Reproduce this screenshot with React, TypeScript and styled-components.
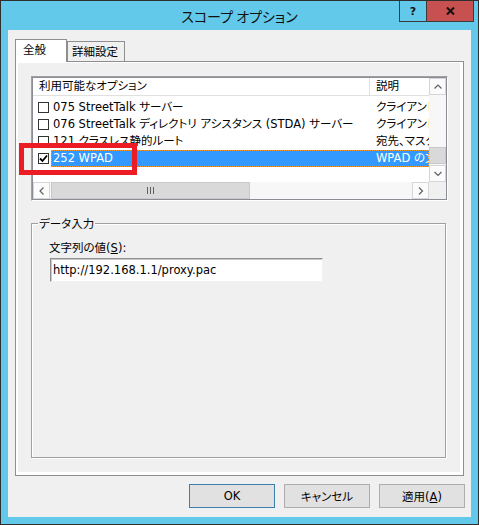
import React from 'react';
import styled, { createGlobalStyle } from 'styled-components';

const UI_FONT = `"DejaVu Sans", "Noto Sans CJK JP", sans-serif`;

const GlobalStyle = createGlobalStyle`
  html, body {
    margin: 0;
    padding: 0;
    background: #ffffff;
  }
  body {
    font-family: ${UI_FONT};
    font-size: 11.5px;
    font-feature-settings: "palt";
    color: #000;
  }
  * {
    box-sizing: border-box;
  }
`;

const Window = styled.div`
  width: 479px;
  height: 525px;
  border: 1px solid #2f2f2f;
  background: #63c9ea;
  display: flex;
  flex-direction: column;
`;

const TitleBar = styled.div`
  height: 29px;
  display: grid;
  grid-template-columns: 1fr auto 1fr;
  align-items: start;
`;

const Title = styled.div`
  grid-column: 2;
  align-self: center;
  font-family: "Noto Sans CJK JP", sans-serif;
  font-size: 14px;
  line-height: 18px;
  color: #111;
`;

const CaptionButtons = styled.div`
  grid-column: 3;
  justify-self: end;
  margin-right: 4px;
  display: flex;
`;

const CaptionButton = styled.div<{ $close?: boolean }>`
  width: ${(p) => (p.$close ? 48 : 27)}px;
  height: 21px;
  display: flex;
  align-items: center;
  justify-content: center;
  background: ${(p) => (p.$close ? '#c75050' : 'transparent')};
  border: 1px solid #3a3a3a;
  border-top: none;
  border-right: ${(p) => (p.$close ? '1px solid #3a3a3a' : 'none')};
  font-family: "DejaVu Sans", sans-serif;
  font-weight: bold;
  font-size: 11px;
  color: #111;
`;

const Frame = styled.div`
  flex: 1;
  padding: 0 7px 7px;
  display: flex;
`;

const Client = styled.div`
  flex: 1;
  background: #f0f0f0;
  padding: 9px 7px 9px;
  display: flex;
  flex-direction: column;
`;

const TabStrip = styled.div`
  height: 22px;
  display: flex;
  align-items: flex-end;
  position: relative;
  z-index: 1;
`;

const Tab = styled.div<{ $active?: boolean; $w: number }>`
  width: ${(p) => p.$w}px;
  height: ${(p) => (p.$active ? 23 : 20)}px;
  margin-bottom: ${(p) => (p.$active ? -1 : 0)}px;
  background: ${(p) => (p.$active ? '#ffffff' : '#f0f0f0')};
  border: 1px solid #8e8e8e;
  border-bottom: none;
  padding: 3px 0 0 ${(p) => (p.$active ? 7 : 4)}px;
  line-height: 14px;
  white-space: nowrap;
`;

const TabPanel = styled.div`
  height: 415px;
  border: 1px solid #8e8e8e;
  background: #ffffff;
  padding: 1px 3px 3px 2px;
  display: flex;
`;

const Page = styled.div`
  flex: 1;
  position: relative;
  background: #f0f0f0;
  padding: 13px 0 0 13px;
`;

const ListFrame = styled.div`
  width: 417px;
  height: 125px;
  border: 1px solid;
  border-color: #a0a0a0 #ffffff #ffffff #a0a0a0;
`;

const ListInner = styled.div`
  height: 100%;
  border: 1px solid #8a8d94;
  background: #ffffff;
  display: grid;
  grid-template-columns: 396px 17px;
  grid-template-rows: 104px 17px;
`;

const ListArea = styled.div`
  overflow: hidden;
`;

const Header = styled.div`
  height: 18px;
  display: grid;
  grid-template-columns: 337px 1fr;
  border-bottom: 1px solid #e0e0e0;
`;

const HeaderCell = styled.div<{ $divider?: boolean }>`
  line-height: 17px;
  padding-left: 6px;
  border-right: ${(p) => (p.$divider ? '1px solid #e0e0e0' : 'none')};
  white-space: nowrap;
  overflow: hidden;
`;

const Rows = styled.div`
  padding-top: 3px;
`;

const Row = styled.div`
  height: 17px;
  display: flex;
  align-items: center;
  padding-left: 5px;
`;

const CheckBox = styled.div`
  flex: none;
  width: 11px;
  height: 11px;
  margin-right: 2px;
  border: 1px solid #333333;
  background: #ffffff;
  display: flex;
  align-items: center;
  justify-content: center;
`;

const Cells = styled.div<{ $selected?: boolean }>`
  flex: 1;
  min-width: 0;
  height: 17px;
  display: grid;
  grid-template-columns: 319px 59px;
  background: ${(p) => (p.$selected ? '#3399ff' : 'transparent')};
  color: ${(p) => (p.$selected ? '#ffffff' : '#000000')};
  outline: ${(p) => (p.$selected ? '1px dotted #f29a2e' : 'none')};
  outline-offset: -1px;
`;

const Cell = styled.div<{ $pad: number }>`
  line-height: 17px;
  padding-left: ${(p) => p.$pad}px;
  white-space: nowrap;
  overflow: hidden;
`;

const VScroll = styled.div`
  display: flex;
  flex-direction: column;
  background: #f7f7f7;
`;

const HScroll = styled.div`
  display: flex;
  background: #f7f7f7;
`;

const Track = styled.div<{ $vertical?: boolean }>`
  flex: 1;
  display: flex;
  flex-direction: ${(p) => (p.$vertical ? 'column' : 'row')};
  justify-content: ${(p) => (p.$vertical ? 'flex-end' : 'flex-start')};
  padding: ${(p) => (p.$vertical ? '0 0 1px' : '0 0 0 1px')};
`;

const Thumb = styled.div<{ $vertical?: boolean }>`
  width: ${(p) => (p.$vertical ? '17px' : '199px')};
  height: 17px;
  background: #d9d9d9;
  border: 1px solid #c9c9c9;
  display: flex;
  align-items: center;
  justify-content: center;
`;

const Grip = styled.div`
  width: 7px;
  height: 7px;
  background: repeating-linear-gradient(to right, #606060 0 1px, transparent 1px 3px);
`;

const ArrowButton = styled.div`
  flex: none;
  width: 17px;
  height: 17px;
  border: 1px solid #d6d6d6;
  background: #fbfbfb;
  display: flex;
  align-items: center;
  justify-content: center;
`;

const Corner = styled.div`
  background: #f0f0f0;
`;

const GroupBox = styled.div`
  margin-top: 22px;
  width: 415px;
  height: 235px;
  border: 1px solid #a0a0a0;
  box-shadow: inset 1px 1px 0 #ffffff, 1px 1px 0 #ffffff;
  padding-left: 17px;
`;

const Legend = styled.div`
  width: max-content;
  margin: -7px 0 0 -11px;
  padding: 0 1px;
  line-height: 14px;
  background: #f0f0f0;
`;

const FieldLabel = styled.div`
  margin-top: 10px;
  line-height: 14px;
`;

const TextField = styled.input`
  display: block;
  margin: 3px 0 0 1px;
  width: 273px;
  height: 24px;
  padding: 0 2px;
  font: inherit;
  color: #000;
  background: #ffffff;
  border: 1px solid;
  border-color: #8f8f8f #f2f2f2 #f2f2f2 #8f8f8f;
  box-shadow: inset 1px 1px 0 #c8c8c8;
  outline: none;
`;

const ButtonRow = styled.div`
  margin: 8px -1px 0 0;
  display: flex;
  justify-content: flex-end;
  gap: 9px;
`;

const Button = styled.button<{ $default?: boolean }>`
  width: 86px;
  height: 24px;
  padding: 0;
  background: #e1e1e1;
  border: 1px solid ${(p) => (p.$default ? '#3c7fb1' : '#adadad')};
  font: inherit;
  color: #000;
`;

const Highlight = styled.div`
  position: absolute;
  left: 1px;
  top: 80px;
  width: 118px;
  height: 32px;
  border: 5px solid #ec1c24;
  pointer-events: none;
`;

const Chevron = ({ dir }: { dir: 'up' | 'down' | 'left' | 'right' }) => {
  const pts: Record<string, string> = {
    up: '0.5,4.5 4,1 7.5,4.5',
    down: '0.5,1 4,4.5 7.5,1',
    left: '4.5,0.5 1,4 4.5,7.5',
    right: '1,0.5 4.5,4 1,7.5',
  };
  const horiz = dir === 'left' || dir === 'right';
  return (
    <svg width={horiz ? 6 : 8} height={horiz ? 8 : 6} viewBox={horiz ? '0 0 6 8' : '0 0 8 6'}>
      <polyline points={pts[dir]} fill="none" stroke="#606060" strokeWidth="1.2" />
    </svg>
  );
};

const CheckMark = () => (
  <svg width="9" height="9" viewBox="0 0 9 9">
    <path d="M1 4.5 L3.5 7 L8 1.5" fill="none" stroke="#000" strokeWidth="1.8" />
  </svg>
);

// descriptions are clipped by the column edge, as in the real list view
const options = [
  { name: '075 StreetTalk サーバー', desc: 'クライアント', checked: false },
  { name: '076 StreetTalk ディレクトリ アシスタンス (STDA) サーバー', desc: 'クライアント', checked: false },
  { name: '121 クラスレス静的ルート', desc: '宛先、マスク', checked: false },
  { name: '252 WPAD', desc: 'WPAD の文', checked: true, selected: true },
];

export default function App() {
  return (
    <>
      <GlobalStyle />
      <Window>
        <TitleBar>
          <Title>スコープ オプション</Title>
          <CaptionButtons>
            <CaptionButton>?</CaptionButton>
            <CaptionButton $close>
              <svg width="9" height="8" viewBox="0 0 9 8">
                <path d="M1 0.5 L8 7.5 M8 0.5 L1 7.5" stroke="#111" strokeWidth="2" />
              </svg>
            </CaptionButton>
          </CaptionButtons>
        </TitleBar>
        <Frame>
          <Client>
            <TabStrip>
              <Tab $active $w={52}>全般</Tab>
              <Tab $w={58}>詳細設定</Tab>
            </TabStrip>
            <TabPanel>
              <Page>
                <ListFrame>
                  <ListInner>
                    <ListArea>
                      <Header>
                        <HeaderCell $divider>利用可能なオプション</HeaderCell>
                        <HeaderCell>説明</HeaderCell>
                      </Header>
                      <Rows>
                        {options.map((o) => (
                          <Row key={o.name}>
                            <CheckBox>{o.checked && <CheckMark />}</CheckBox>
                            <Cells $selected={o.selected}>
                              <Cell $pad={2}>{o.name}</Cell>
                              <Cell $pad={6}>{o.desc}</Cell>
                            </Cells>
                          </Row>
                        ))}
                      </Rows>
                    </ListArea>
                    <VScroll>
                      <ArrowButton>
                        <Chevron dir="up" />
                      </ArrowButton>
                      <Track $vertical>
                        <Thumb $vertical />
                      </Track>
                      <ArrowButton>
                        <Chevron dir="down" />
                      </ArrowButton>
                    </VScroll>
                    <HScroll>
                      <ArrowButton>
                        <Chevron dir="left" />
                      </ArrowButton>
                      <Track>
                        <Thumb>
                          <Grip />
                        </Thumb>
                      </Track>
                      <ArrowButton>
                        <Chevron dir="right" />
                      </ArrowButton>
                    </HScroll>
                    <Corner />
                  </ListInner>
                </ListFrame>
                <GroupBox>
                  <Legend>データ入力</Legend>
                  <FieldLabel>
                    文字列の値(<u>S</u>):
                  </FieldLabel>
                  <TextField readOnly value="http://192.168.1.1/proxy.pac" />
                </GroupBox>
                <Highlight />
              </Page>
            </TabPanel>
            <ButtonRow>
              <Button $default>OK</Button>
              <Button>キャンセル</Button>
              <Button>
                適用(<u>A</u>)
              </Button>
            </ButtonRow>
          </Client>
        </Frame>
      </Window>
    </>
  );
}
